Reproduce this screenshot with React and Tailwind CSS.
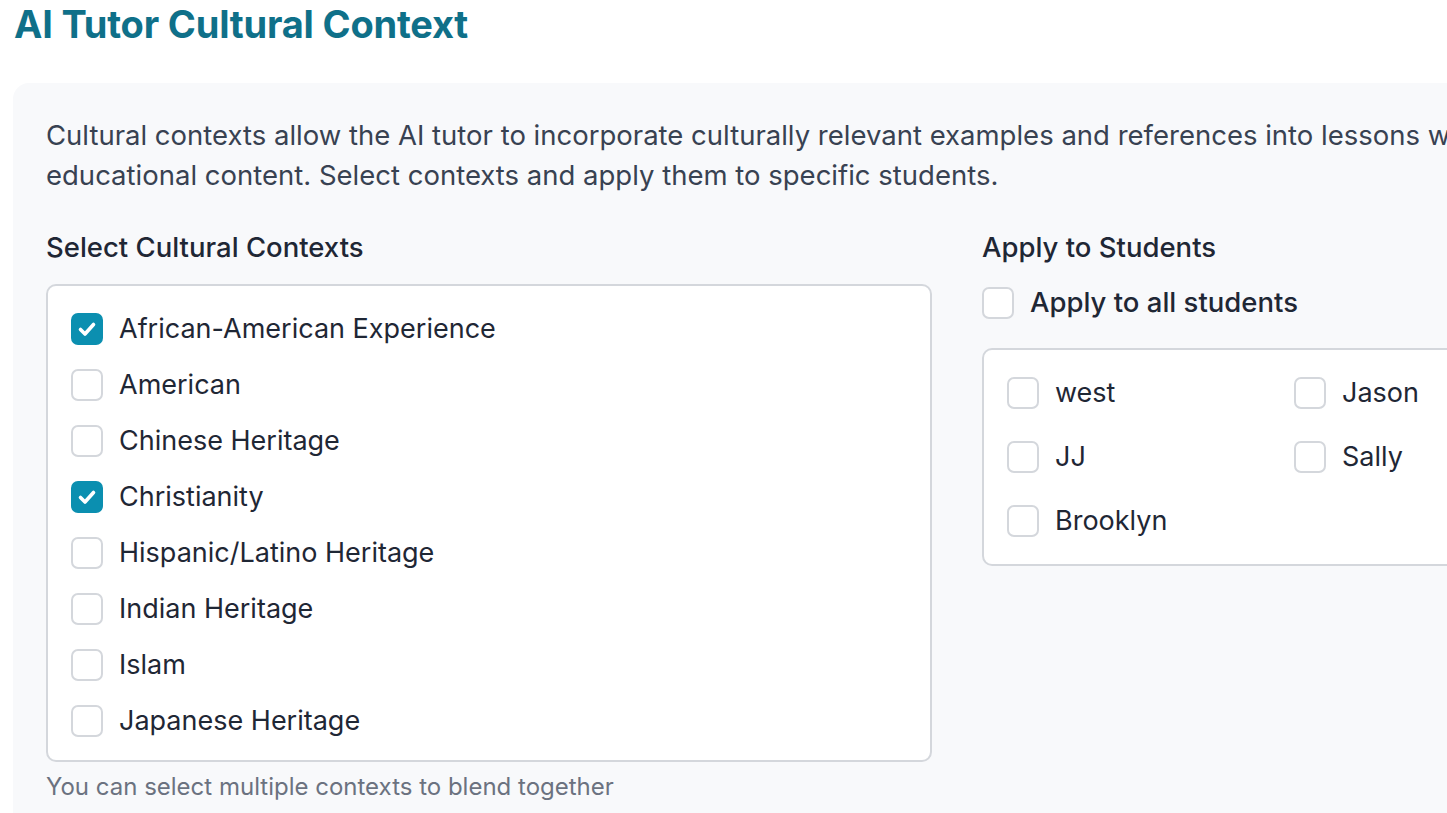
import { useState } from 'react'

const CONTEXTS = [
  'African-American Experience',
  'American',
  'Chinese Heritage',
  'Christianity',
  'Hispanic/Latino Heritage',
  'Indian Heritage',
  'Islam',
  'Japanese Heritage',
]

const STUDENTS = ['west', 'Jason', 'JJ', 'Sally', 'Brooklyn']

function Box({ checked, onClick }) {
  return (
    <button
      onClick={onClick}
      className={`shrink-0 w-8 h-8 rounded-[7px] flex items-center justify-center ${
        checked ? 'bg-[#0b8fb0]' : 'bg-white border-2 border-[#d4d7dc]'
      }`}
    >
      {checked && (
        <svg width="32" height="32" viewBox="0 0 32 32" fill="none">
          <path d="M9.5 16.5l4.5 4.5 8.5-9.5" stroke="white" strokeWidth="3.6" strokeLinecap="round" strokeLinejoin="round" />
        </svg>
      )}
    </button>
  )
}

export default function App() {
  const [selected, setSelected] = useState(['African-American Experience', 'Christianity'])
  const [students, setStudents] = useState([])
  const [all, setAll] = useState(false)

  const toggle = (list, setList, v) =>
    setList(list.includes(v) ? list.filter(x => x !== v) : [...list, v])

  return (
    <div className="w-[1447px] h-[813px] overflow-hidden bg-white" style={{ fontFamily: 'Inter, "Noto Sans", sans-serif' }}>
      <div className="w-[2000px] pl-[14px]">
        <h1 className="text-[38px] leading-[48px] font-bold text-[#0f7089] tracking-[-0.2px]">AI Tutor Cultural Context</h1>

        <div className="mt-[35px] ml-[-1px] bg-[#f8f9fb] rounded-2xl pt-[32px] pl-[33px] pb-10">
          <p className="text-[27.5px] leading-[40px] text-[#384252]">
            Cultural contexts allow the AI tutor to incorporate culturally relevant examples and references into lessons without changing the core
            <br />
            educational content. Select contexts and apply them to specific students.
          </p>

          <div className="flex gap-[50px] mt-[32px]">
            {/* Contexts */}
            <div className="w-[886px]">
              <h3 className="text-[27.5px] leading-[40px] font-medium text-[#1f2735]">Select Cultural Contexts</h3>
              <div className="mt-[17px] bg-white border-2 border-[#d4d7dc] rounded-[10px] pl-[23px] pt-[15px] pb-[11px] flex flex-col">
                {CONTEXTS.map(c => (
                  <label key={c} className="flex items-center gap-4 h-14 cursor-pointer">
                    <Box checked={selected.includes(c)} onClick={() => toggle(selected, setSelected, c)} />
                    <span className="text-[27px] text-[#1f2735]">{c}</span>
                  </label>
                ))}
              </div>
              <p className="mt-[10px] text-[24px] leading-[30px] text-[#6b7280]">You can select multiple contexts to blend together</p>
            </div>

            {/* Students */}
            <div className="w-[886px]">
              <h3 className="text-[27.5px] leading-[40px] font-medium text-[#1f2735]">Apply to Students</h3>
              <label className="mt-[20px] flex items-center gap-4 h-8 cursor-pointer">
                <Box checked={all} onClick={() => setAll(!all)} />
                <span className="text-[27.5px] font-medium text-[#1f2735]">Apply to all students</span>
              </label>
              <div className="mt-[29px] bg-white border-2 border-[#d4d7dc] rounded-[10px] pl-[23px] pt-[27px] pb-[27px] grid grid-cols-[287px_287px] gap-y-8">
                {STUDENTS.map(s => (
                  <label key={s} className="flex items-center gap-4 h-8 cursor-pointer">
                    <Box checked={students.includes(s)} onClick={() => toggle(students, setStudents, s)} />
                    <span className="text-[27px] text-[#1f2735]">{s}</span>
                  </label>
                ))}
              </div>
            </div>
          </div>
        </div>
      </div>
    </div>
  )
}
